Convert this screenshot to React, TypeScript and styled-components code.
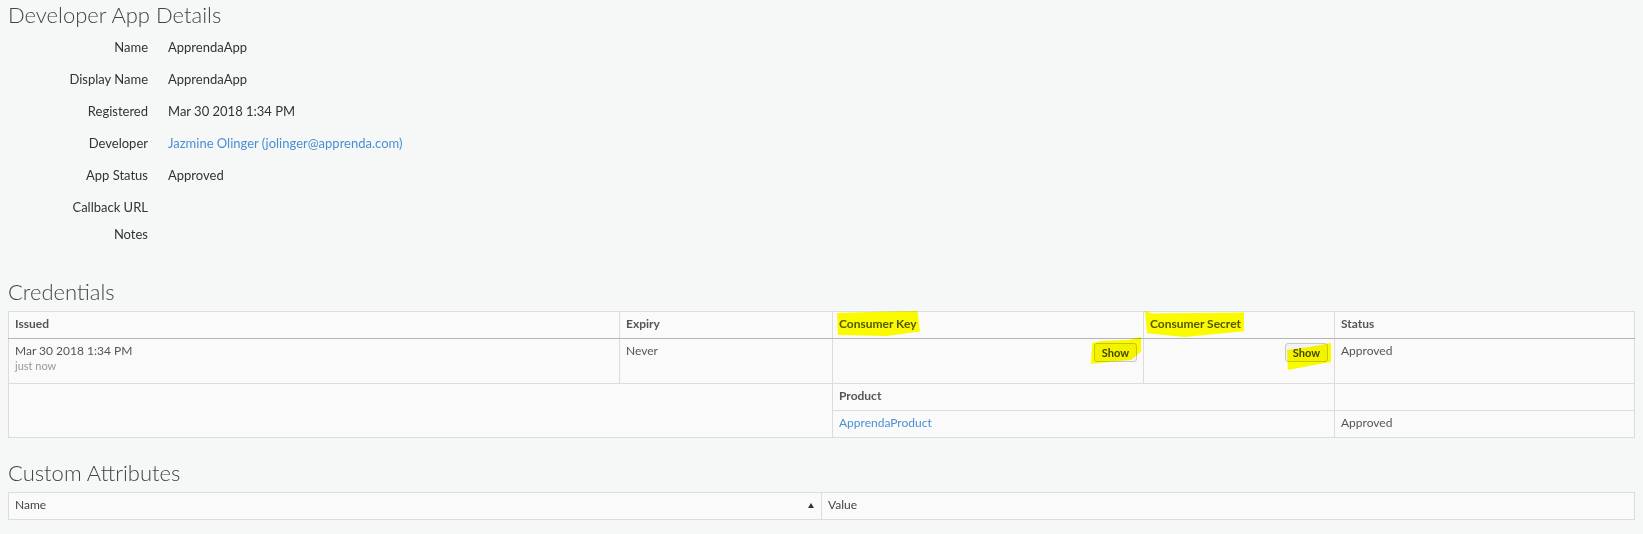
import React from 'react';
import styled, { createGlobalStyle } from 'styled-components';

const GlobalStyle = createGlobalStyle`
  html, body { margin: 0; padding: 0; background: #f6f7f7; }
  body {
    font-family: Lato, "Noto Sans", "Liberation Sans", Arial, sans-serif;
    color: #333;
    overflow: hidden;
  }
`;

const Page = styled.div`
  display: flex;
  flex-direction: column;
  padding: 0 8px;
`;

const Title = styled.h2<{ $mt: number }>`
  margin: ${(p) => p.$mt}px 0 0;
  font-size: 22px;
  line-height: 26px;
  font-weight: 300;
  color: #444;
`;

const DetailList = styled.dl`
  display: flex;
  flex-direction: column;
  margin: 9px 0 0;
`;

const DetailRow = styled.div<{ $h: number }>`
  display: flex;
  align-items: flex-start;
  height: ${(p) => p.$h}px;
  font-size: 13px;
  line-height: 20px;
`;

const Label = styled.dt`
  width: 140px;
  padding-right: 20px;
  text-align: right;
  color: #333;
  flex-shrink: 0;
`;

const Value = styled.dd`
  margin: 0;
  color: #333;
`;

const Link = styled.a`
  color: #4a8fd6;
  text-decoration: none;
`;

const Table = styled.table`
  width: 100%;
  border-collapse: collapse;
  table-layout: fixed;
  background: #fafafa;
  border: 1px solid #dcdcdc;
  font-size: 12px;
  margin-top: 6px;
`;

const Th = styled.th<{ $plain?: boolean }>`
  position: relative;
  text-align: left;
  padding: 4px 6px 6px;
  line-height: 16px;
  font-weight: ${(p) => (p.$plain ? 400 : 700)};
  color: ${(p) => (p.$plain ? '#444' : '#555')};
  border: 1px solid #dcdcdc;
  border-bottom-color: ${(p) => (p.$plain ? '#dcdcdc' : '#b4b4b4')};
`;

const Td = styled.td<{ $tall?: boolean }>`
  position: relative;
  vertical-align: top;
  padding: ${(p) => (p.$tall ? '4px 6px 10px' : '4px 6px 6px')};
  line-height: 16px;
  color: #555;
  border: 1px solid #dcdcdc;
`;

const SubHead = styled(Td)`
  font-weight: 700;
  color: #555;
`;

const Ago = styled.div`
  font-size: 11px;
  line-height: 14px;
  color: #999;
`;

const ShowButton = styled.button`
  float: right;
  height: 19px;
  padding: 0 7px;
  font-family: inherit;
  font-size: 11px;
  font-weight: 700;
  line-height: 17px;
  color: #444;
  background: #f3f3f3;
  border: 1px solid #c8c8c8;
  border-radius: 3px;
`;

const SortArrow = styled.span`
  float: right;
  margin-top: 6px;
  margin-right: 1px;
  width: 0;
  height: 0;
  border-left: 3.5px solid transparent;
  border-right: 3.5px solid transparent;
  border-bottom: 5px solid #333;
`;

const Marker = styled.span<{ $l: number; $t: number; $w: number; $h: number; $clip: string }>`
  position: absolute;
  left: ${(p) => p.$l}px;
  top: ${(p) => p.$t}px;
  width: ${(p) => p.$w}px;
  height: ${(p) => p.$h}px;
  background: #ffff00;
  mix-blend-mode: multiply;
  clip-path: polygon(${(p) => p.$clip});
  pointer-events: none;
  z-index: 2;
`;

const details: { label: string; value?: React.ReactNode; h: number }[] = [
  { label: 'Name', value: 'ApprendaApp', h: 32 },
  { label: 'Display Name', value: 'ApprendaApp', h: 32 },
  { label: 'Registered', value: 'Mar 30 2018 1:34 PM', h: 32 },
  { label: 'Developer', value: <Link href="#">Jazmine Olinger (jolinger@apprenda.com)</Link>, h: 32 },
  { label: 'App Status', value: 'Approved', h: 32 },
  { label: 'Callback URL', h: 27 },
  { label: 'Notes', h: 27 },
];

export default function App() {
  return (
    <>
      <GlobalStyle />
      <Page>
        <Title $mt={2}>Developer App Details</Title>
        <DetailList>
          {details.map((d) => (
            <DetailRow key={d.label} $h={d.h}>
              <Label>{d.label}</Label>
              <Value>{d.value}</Value>
            </DetailRow>
          ))}
        </DetailList>

        <Title $mt={28}>Credentials</Title>
        <Table>
          <colgroup>
            <col style={{ width: 611 }} />
            <col style={{ width: 213 }} />
            <col style={{ width: 311 }} />
            <col style={{ width: 191 }} />
            <col />
          </colgroup>
          <thead>
            <tr>
              <Th>Issued</Th>
              <Th>Expiry</Th>
              <Th>
                Consumer Key
                <Marker $l={4} $t={-1} $w={83} $h={25} $clip="0 8%, 40% 4%, 97% 0, 100% 82%, 60% 100%, 1% 96%" />
              </Th>
              <Th>
                Consumer Secret
                <Marker $l={1} $t={-1} $w={99} $h={26} $clip="0 0, 8% 10%, 100% 6%, 100% 78%, 40% 100%, 2% 86%" />
              </Th>
              <Th>Status</Th>
            </tr>
          </thead>
          <tbody>
            <tr>
              <Td $tall>
                Mar 30 2018 1:34 PM
                <Ago>just now</Ago>
              </Td>
              <Td $tall>Never</Td>
              <Td $tall>
                <ShowButton>Show</ShowButton>
                <Marker $l={258} $t={-2} $w={50} $h={27} $clip="2% 22%, 20% 15%, 78% 10%, 100% 0, 100% 55%, 80% 85%, 40% 92%, 0 100%" />
              </Td>
              <Td $tall>
                <ShowButton>Show</ShowButton>
                <Marker $l={143} $t={4} $w={44} $h={27} $clip="0 26%, 50% 15%, 100% 0, 100% 70%, 50% 85%, 2% 100%" />
              </Td>
              <Td $tall>Approved</Td>
            </tr>
            <tr>
              <Td colSpan={2} rowSpan={2} />
              <SubHead colSpan={2}>Product</SubHead>
              <Td />
            </tr>
            <tr>
              <Td colSpan={2}>
                <Link href="#">ApprendaProduct</Link>
              </Td>
              <Td>Approved</Td>
            </tr>
          </tbody>
        </Table>

        <Title $mt={22}>Custom Attributes</Title>
        <Table>
          <thead>
            <tr>
              <Th $plain>
                Name
                <SortArrow />
              </Th>
              <Th $plain>Value</Th>
            </tr>
          </thead>
        </Table>
      </Page>
    </>
  );
}
